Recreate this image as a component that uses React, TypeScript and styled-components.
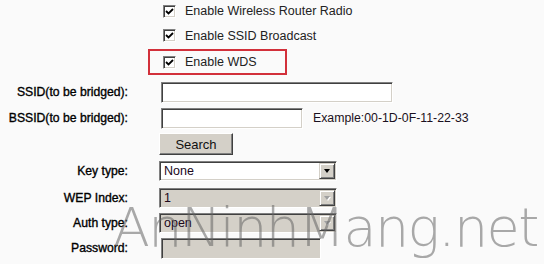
import * as React from 'react';
import styled, { createGlobalStyle } from 'styled-components';

const GlobalStyle = createGlobalStyle`
  html, body {
    margin: 0;
    padding: 0;
    background: #fafafa;
  }
  body {
    font-family: "Liberation Sans", Arial, sans-serif;
    color: #1a1a1a;
  }
`;

const face = '#d4d0c8';

const Page = styled.div`
  position: relative;
  width: 544px;
  height: 264px;
  overflow: hidden;
  background: #fafafa;
`;

const Form = styled.div`
  display: flex;
  flex-direction: column;
`;

const Row = styled.div<{ $h: number }>`
  display: grid;
  grid-template-columns: 128px 1fr;
  column-gap: 31px;
  align-items: center;
  height: ${(p) => p.$h}px;
`;

const Label = styled.div`
  text-align: right;
  font-size: 12.2px;
  color: #000;
  -webkit-text-stroke: 0.35px #000;
  white-space: nowrap;
`;

const Control = styled.div`
  display: flex;
  align-items: center;
  gap: 10px;
  height: 100%;
`;

const CheckRow = styled.label<{ $inset?: boolean }>`
  display: flex;
  align-items: center;
  gap: 9px;
  margin-left: ${(p) => (p.$inset ? 0 : 4)}px;
  font-size: 12.5px;
  color: #222;
  white-space: nowrap;
`;

const Highlight = styled.div`
  display: flex;
  align-items: center;
  box-sizing: border-box;
  margin-left: -11px;
  padding-left: 13px;
  width: 139px;
  height: 26px;
  border: 2px solid #d2303a;
`;

const Box = styled.span`
  box-sizing: border-box;
  width: 13px;
  height: 13px;
  background: #fff;
  border: 1px solid;
  border-color: #808080 #fff #fff #808080;
  box-shadow: inset 1px 1px 0 #404040, inset -1px -1px 0 ${face};
  display: flex;
  align-items: center;
  justify-content: center;
`;

const TextInput = styled.div<{ $w: number; $disabled?: boolean }>`
  box-sizing: border-box;
  width: ${(p) => p.$w}px;
  height: 21px;
  margin-left: 2px;
  background: ${(p) => (p.$disabled ? face : '#fff')};
  border: 1px solid;
  border-color: #808080 #fff #fff #808080;
  box-shadow: inset 1px 1px 0 #404040, inset -1px -1px 0 ${face};
`;

const Hint = styled.span`
  font-size: 12.3px;
  color: #1a1020;
  white-space: nowrap;
`;

const Button = styled.div`
  box-sizing: border-box;
  width: 74px;
  height: 22px;
  background: ${face};
  border: 1px solid;
  border-color: #fff #404040 #404040 #fff;
  box-shadow: inset -1px -1px 0 #808080;
  display: flex;
  align-items: center;
  justify-content: center;
  font-size: 13px;
  color: #111;
`;

const SelectBox = styled.div<{ $disabled?: boolean }>`
  box-sizing: border-box;
  width: 178px;
  height: 20px;
  display: flex;
  align-items: stretch;
  background: ${(p) => (p.$disabled ? face : '#fff')};
  border: 1px solid;
  border-color: #808080 #fff #fff #808080;
  box-shadow: inset 1px 1px 0 #404040, inset -1px -1px 0 ${face};
  padding: 1px;
`;

const SelectValue = styled.span`
  flex: 1;
  display: flex;
  align-items: center;
  padding-left: 3px;
  font-size: 12.5px;
  color: #20081c;
`;

const ArrowButton = styled.span<{ $disabled?: boolean }>`
  box-sizing: border-box;
  width: 16px;
  background: ${face};
  border: 1px solid;
  border-color: ${face} #404040 #404040 ${face};
  box-shadow: inset 1px 1px 0 #fff, inset -1px -1px 0 #808080;
  display: flex;
  align-items: center;
  justify-content: center;
  &::after {
    content: '';
    border-left: 3.5px solid transparent;
    border-right: 3.5px solid transparent;
    border-top: 4px solid ${(p) => (p.$disabled ? '#a0a0a0' : '#000')};
    filter: ${(p) => (p.$disabled ? 'drop-shadow(1px 1px 0 #fff)' : 'none')};
  }
`;

const Watermark = styled.span`
  position: absolute;
  left: 113px;
  top: 201px;
  font-family: "DejaVu Sans", sans-serif;
  font-weight: 200;
  font-size: 54px;
  line-height: 1;
  letter-spacing: -1.6px;
  color: rgba(100, 100, 100, 0.55);
  white-space: nowrap;
  pointer-events: none;
`;

const Check: React.FC = () => (
  <Box>
    <svg width="9" height="9" viewBox="0 0 9 9">
      <path d="M1 4 L3.5 6.5 L8 2" fill="none" stroke="#000" strokeWidth="1.8" />
    </svg>
  </Box>
);

const Select: React.FC<{ value: string; disabled?: boolean }> = ({ value, disabled }) => (
  <SelectBox $disabled={disabled}>
    <SelectValue>{value}</SelectValue>
    <ArrowButton $disabled={disabled} />
  </SelectBox>
);

export default function App() {
  return (
    <Page>
      <GlobalStyle />
      <Form>
        <Row $h={22}>
          <span />
          <Control>
            <CheckRow>
              <Check />
              Enable Wireless Router Radio
            </CheckRow>
          </Control>
        </Row>
        <Row $h={27}>
          <span />
          <Control>
            <CheckRow>
              <Check />
              Enable SSID Broadcast
            </CheckRow>
          </Control>
        </Row>
        <Row $h={26}>
          <span />
          <Control>
            <Highlight>
              <CheckRow $inset>
                <Check />
                Enable WDS
              </CheckRow>
            </Highlight>
          </Control>
        </Row>
        <Row $h={4} />
        <Row $h={26}>
          <Label>SSID(to be bridged):</Label>
          <Control>
            <TextInput $w={232} />
          </Control>
        </Row>
        <Row $h={26}>
          <Label>BSSID(to be bridged):</Label>
          <Control>
            <TextInput $w={142} />
            <Hint>Example:00-1D-0F-11-22-33</Hint>
          </Control>
        </Row>
        <Row $h={26}>
          <span />
          <Control>
            <Button>Search</Button>
          </Control>
        </Row>
        <Row $h={28}>
          <Label>Key type:</Label>
          <Control>
            <Select value="None" />
          </Control>
        </Row>
        <Row $h={25}>
          <Label>WEP Index:</Label>
          <Control>
            <Select value="1" disabled />
          </Control>
        </Row>
        <Row $h={25}>
          <Label>Auth type:</Label>
          <Control>
            <Select value="open" disabled />
          </Control>
        </Row>
        <Row $h={26}>
          <Label>Password:</Label>
          <Control>
            <TextInput $w={160} $disabled />
          </Control>
        </Row>
      </Form>
      <Watermark>AnNinhMang.net</Watermark>
    </Page>
  );
}
